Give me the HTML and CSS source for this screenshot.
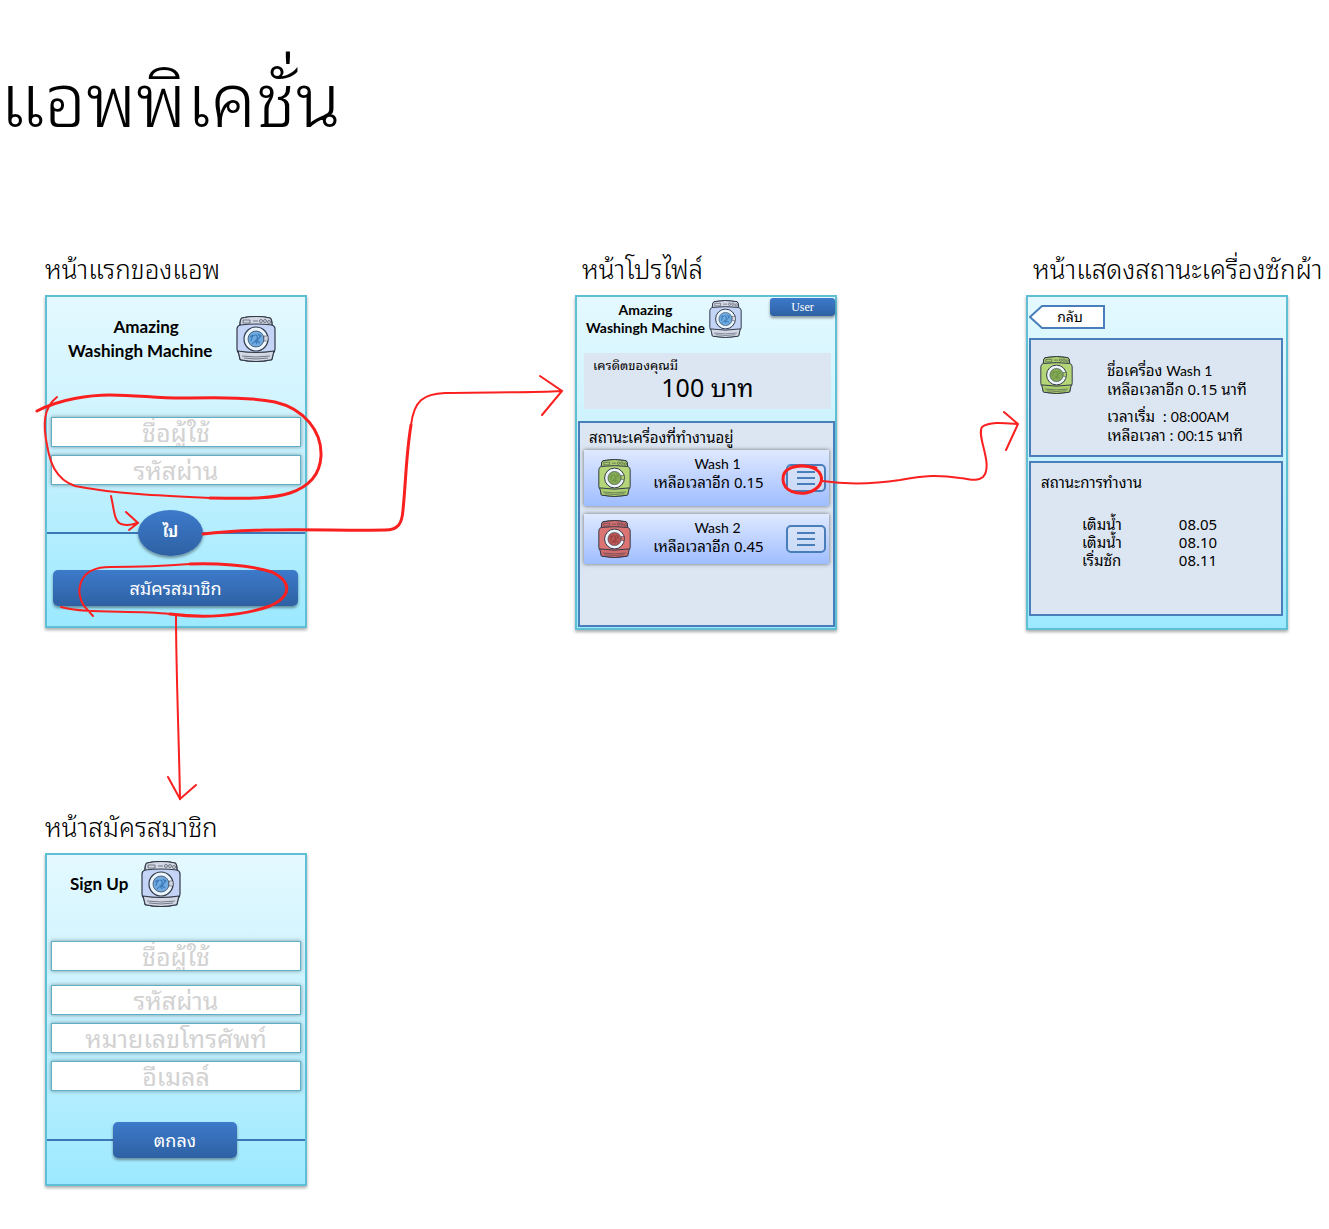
FILE: index.html
```html
<!DOCTYPE html>
<html lang="th">
<head>
<meta charset="utf-8">
<title>แอพพิเคชั่น</title>
<link rel="stylesheet" href="styles.css">
</head>
<body>
<svg class="defs" aria-hidden="true">
  <symbol id="washer" viewBox="0 0 40 46">
    <path class="shell" d="M6 2Q20 -1 34 2Q36 3 36 9Q39 10 39 13V33Q39 36 37 37L36 43Q36 44 34 44Q20 47 6 44Q4 44 4 43L3 37Q1 36 1 33V13Q1 10 4 9Q4 3 6 2Z"/>
    <path class="trim" d="M6 2Q20 -1 34 2Q36 3 36 9Q20 7 4 9Q4 3 6 2Z"/>
    <path class="trim" d="M2 35Q20 38 38 35L36 43Q36 44 34 44Q20 47 6 44Q4 44 4 43Z"/>
    <path class="detail" d="M7 4h7v3H7zM17 5h5M6 40Q20 42 34 40M8 42Q20 44 32 42"/>
    <circle class="detail" cx="25" cy="5" r="1.5"/><circle class="detail" cx="29" cy="5" r="1.5"/><circle class="detail" cx="33" cy="6" r="1.5"/>
    <circle class="ring" cx="20" cy="23" r="12"/>
    <circle class="glass" cx="20" cy="23" r="8"/>
    <path class="swirl" d="M15 25q1-6 4-6t2 4 4-4M16 28q4-5 8-1M14 21l3-2M22 18l3 3M19 24l2 4"/>
    <rect class="latch" x="28" y="20" width="4" height="5"/>
  </symbol>
</svg>
<main class="board">
  <h1 class="title">แอพพิเคชั่น</h1>

  <div class="screens">
    <section class="item">
      <h2 class="label">หน้าแรกของแอพ</h2>
      <form class="phone login">
        <header class="brand">
          <p class="name"><span class="lead">Amazing</span><br>Washingh Machine</p>
          <svg class="washer blue" aria-hidden="true"><use href="#washer"/></svg>
        </header>
        <div class="fields">
          <input class="field" type="text" placeholder="ชื่อผู้ใช้" aria-label="ชื่อผู้ใช้">
          <input class="field" type="password" placeholder="รหัสผ่าน" aria-label="รหัสผ่าน">
        </div>
        <div class="divider"><button class="go" type="button">ไป</button></div>
        <button class="primary wide" type="button">สมัครสมาชิก</button>
      </form>
    </section>

    <section class="item inset">
      <h2 class="label">หน้าโปรไฟล์</h2>
      <div class="phone profile">
        <header class="brand small">
          <p class="name">Amazing<br>Washingh Machine</p>
          <svg class="washer blue" aria-hidden="true"><use href="#washer"/></svg>
          <button class="primary user" type="button">User</button>
        </header>
        <div class="credit">
          <p class="caption">เครดิตของคุณมี</p>
          <p class="amount">100 บาท</p>
        </div>
        <div class="panel machines">
          <h3 class="panel-title">สถานะเครื่องที่ทำงานอยู่</h3>
          <div class="machine">
            <svg class="washer green" aria-hidden="true"><use href="#washer"/></svg>
            <p class="status"><span class="wash">Wash 1</span><br>เหลือเวลาอีก 0.15</p>
            <button class="menu" type="button" aria-label="Wash 1"><span></span><span></span><span></span></button>
          </div>
          <div class="machine">
            <svg class="washer red" aria-hidden="true"><use href="#washer"/></svg>
            <p class="status"><span class="wash">Wash 2</span><br>เหลือเวลาอีก 0.45</p>
            <button class="menu" type="button" aria-label="Wash 2"><span></span><span></span><span></span></button>
          </div>
        </div>
      </div>
    </section>

    <section class="item inset">
      <h2 class="label">หน้าแสดงสถานะเครื่องซักผ้า</h2>
      <div class="phone detail-screen">
        <button class="back" type="button">
          <svg class="back-shape" viewBox="0 0 76 24" aria-hidden="true"><path d="M1 12L13 1H75V23H13Z"/></svg>
          <span>กลับ</span>
        </button>
        <div class="panel info">
          <svg class="washer green" aria-hidden="true"><use href="#washer"/></svg>
          <div class="facts">
            <p>ชื่อเครื่อง <span class="wash">Wash 1</span><br>เหลือเวลาอีก 0.15 นาที</p>
            <p>เวลาเริ่ม &nbsp;: <span class="wash">08:00AM</span><br>เหลือเวลา : <span class="wash">00:15</span> นาที</p>
          </div>
        </div>
        <div class="panel progress">
          <h3 class="panel-title">สถานะการทำงาน</h3>
          <table class="log">
            <tr><td>เติมน้ำ</td><td>08.05</td></tr>
            <tr><td>เติมน้ำ</td><td>08.10</td></tr>
            <tr><td>เริ่มซัก</td><td>08.11</td></tr>
          </table>
        </div>
      </div>
    </section>

    <section class="item">
      <h2 class="label">หน้าสมัครสมาชิก</h2>
      <form class="phone signup">
        <header class="brand">
          <p class="name">Sign Up</p>
          <svg class="washer blue" aria-hidden="true"><use href="#washer"/></svg>
        </header>
        <div class="fields">
          <input class="field first" type="text" placeholder="ชื่อผู้ใช้" aria-label="ชื่อผู้ใช้">
          <input class="field" type="password" placeholder="รหัสผ่าน" aria-label="รหัสผ่าน">
          <input class="field" type="tel" placeholder="หมายเลขโทรศัพท์" aria-label="หมายเลขโทรศัพท์">
          <input class="field" type="email" placeholder="อีเมลล์" aria-label="อีเมลล์">
        </div>
        <div class="divider"><button class="primary ok" type="button">ตกลง</button></div>
      </form>
    </section>
  </div>

  <svg class="flow" aria-hidden="true">
    <path class="bold" d="M37 411C60 399 90 395 110 395C140 395 160 399 190 398C225 397 255 398 275 402C305 409 322 432 321 456C320 475 308 487 290 493C268 500 240 498 210 498"/>
    <path d="M210 498C165 496 115 494 75 486C55 479 50 462 47 445C43 425 43 408 57 397"/>
    <path d="M111 496C114 508 114 522 121 524C127 526 132 525 137 523M126 512L138 523L129 530"/>
    <path class="bold" d="M170 614C200 618 240 617 270 606C292 596 292 582 272 572C250 565 215 563 190 564"/>
    <path d="M61 607C85 614 130 610 170 614M190 564C165 566 140 567 110 567C94 567 86 572 82 580C77 590 80 600 84 606L93 616"/>
    <path d="M176 616C176 670 179 740 180 799"/>
    <path d="M168 777L180 799L196 785"/>
    <path class="bold" d="M203 534C260 527 330 531 385 530C398 530 402 524 403 510C406 480 406 455 411 425"/>
    <path d="M411 425C414 400 424 394 445 393C480 392 530 393 561 391M540 376L562 391L542 415"/>
    <path class="bold" d="M816 468C796 463 782 468 783 480C784 492 797 494 806 493C820 490 825 480 819 472C812 465 798 464 790 468"/>
    <path d="M822 481C850 485 880 483 900 480C925 475 940 475 960 478C970 479 977 482 983 477C994 465 976 436 982 427C990 421 1005 423 1018 424M1004 412L1018 424L1006 450"/>
  </svg>
</main>
</body>
</html>
```
FILE: styles.css
```css
* { box-sizing: border-box; margin: 0; padding: 0; }
body { background: #fff; color: #000; font: 15px/18px "Noto Sans", "Noto Sans Thai Looped", Loma, "Noto Sans Thai", sans-serif; }
button, input { font: inherit; border: 0; }
.defs { position: absolute; width: 0; height: 0; }

.board { position: relative; padding-bottom: 40px; }
.title { height: 255px; padding: 40px 0 0; font-size: 74px; line-height: 118px; font-weight: 300; }
.screens {
  display: grid;
  grid-template-columns: 530px 451px 1fr;
  row-gap: 183px;
  padding-left: 45px;
}
.label { height: 40px; white-space: nowrap; font-size: 26px; line-height: 28px; font-weight: 300; }
.inset .label { padding-left: 7px; }
.phone {
  display: flex;
  flex-direction: column;
  width: 262px;
  min-height: 333px;
  padding: 0 4px;
  border: 2px solid #5fbfd5;
  background: linear-gradient(#e4f9ff, #c9f2fe 45%, #9ce9ff);
  box-shadow: 0 2px 3px #0005;
}
.inset .phone { min-height: 335px; }

.brand { display: flex; align-items: center; font: 700 17px/24px Lato, sans-serif; color: #000; }
.name { text-align: center; }
.lead { padding-left: 12px; }
.washer { width: 40px; height: 46px; flex: none; stroke: #333a48; stroke-width: 1.2; }
.blue { --shell: #c3d4f6; --trim: #d3d8e4; --ring: #eaf6ff; --glass: #6fabe0; --swirl: #3a78b8; }
.green { --shell: #b4d678; --trim: #a9cc6e; --ring: #eef6ff; --glass: #86ab55; --swirl: #6b9145; }
.red { --shell: #dc7474; --trim: #d06c6c; --ring: #eef6ff; --glass: #b85555; --swirl: #933f3f; }
.shell { fill: var(--shell); }
.trim { fill: var(--trim); }
.detail { fill: none; stroke-width: .6; }
.ring { fill: var(--ring); }
.glass { fill: var(--glass); stroke-width: .7; }
.swirl { fill: none; stroke: var(--swirl); }
.latch { fill: var(--trim); stroke-width: .5; }

.fields { display: grid; gap: 8px; }
.field {
  width: 100%;
  height: 30px;
  border: 1px solid #5fb0c6;
  background: #fff;
  box-shadow: 0 0 4px #0006;
  font-size: 25px;
  text-align: center;
}
.field::placeholder { color: #d2d2d2; opacity: 1; }

.divider { display: flex; align-items: center; margin: 0 -4px; }
.divider::before, .divider::after { content: ""; flex: 91; height: 2px; background: #3a76b8; }
.divider::after { flex: 102; }
.go, .primary {
  background: linear-gradient(#3d7acb, #2e61a3);
  color: #fff;
  box-shadow: 0 2px 3px #0006;
}
.go { width: 65px; height: 46px; padding-bottom: 4px; border-radius: 50%; font-weight: 700; }
.primary { border-radius: 5px; font-size: 18px; }
.wide { height: 36px; margin: 14px 3px 0 2px; }

.login .brand { gap: 24px; margin: 18px 0 54px 17px; }
.login .divider { margin-top: 25px; }

.small { gap: 4px; padding-left: 8px; font-size: 14px; line-height: 18px; }
.small .name { padding-top: 3px; }
.small .washer, .machine .washer, .info .washer { width: 33px; height: 38px; }
.small .washer { margin-top: 3px; }
.user { align-self: flex-start; width: 65px; height: 18px; margin: 1px -4px 0 auto; border-radius: 3px; font: 12px/18px "Liberation Serif", serif; }
.profile { padding: 0 4px 0 1px; }
.credit { height: 56px; margin: 15px 0 12px 6px; padding: 3px 9px; background: #dce6f2; }
.caption { font-size: 13px; line-height: 18px; }
.amount { font-size: 25px; line-height: 26px; text-align: center; }
.panel { border: 2px solid #4a7ebb; background: #dce6f2; }
.panel-title { font-size: 15px; line-height: 18px; font-weight: 400; }
.machines { height: 206px; margin-right: -4px; padding: 5px 4px; }
.machines .panel-title { padding: 0 5px 4px; }
.machine {
  display: flex;
  align-items: center;
  height: 56px;
  padding: 0 3px 0 14px;
  background: linear-gradient(#dfe9ff, #9fbdff);
  box-shadow: 0 0 4px #0008;
}
.machine + .machine { height: 50px; margin-top: 8px; }
.status { flex: 1; padding-bottom: 12px; text-align: center; color: #000; }
.machine + .machine .status { padding-bottom: 6px; }
.wash { font-family: Lato, sans-serif; font-size: 14px; }
.status .wash { padding-left: 18px; }
.menu {
  display: grid;
  align-content: center;
  justify-items: center;
  gap: 4px;
  width: 40px;
  height: 28px;
  border: 2px solid #4a7ebb;
  border-radius: 5px;
  background: #dce6f299;
}
.menu span { width: 18px; height: 2px; background: #4a7ebb; }

.detail-screen { padding: 0 3px 0 1px; }
.back { position: relative; width: 76px; height: 24px; margin: 8px 0 9px; padding-left: 6px; background: none; font-size: 14px; color: #000; }
.back span { position: relative; }
.back-shape { position: absolute; inset: 0; fill: #fff; stroke: #4a7ebb; stroke-width: 2; }
.info { display: flex; gap: 34px; height: 119px; padding: 16px 9px 10px; }
.facts { display: grid; align-content: space-between; padding-top: 5px; white-space: nowrap; }
.progress { height: 155px; margin-top: 4px; padding: 10px; }
.log { margin: 24px 0 0 41px; border-spacing: 0; white-space: nowrap; }
.log td { height: 18px; padding-right: 57px; }

.signup .brand { gap: 13px; margin: 6px 0 34px 19px; }
.signup .first { margin-bottom: 6px; }
.signup .divider { margin-top: 31px; }
.signup .divider::before { flex: 66; }
.signup .divider::after { flex: 68; }
.ok { width: 124px; height: 36px; }

.flow { position: absolute; inset: 0; width: 100%; height: 100%; pointer-events: none; fill: none; stroke: #fb2020; stroke-width: 2; stroke-linecap: round; }
.flow .bold { stroke-width: 3; }
```
